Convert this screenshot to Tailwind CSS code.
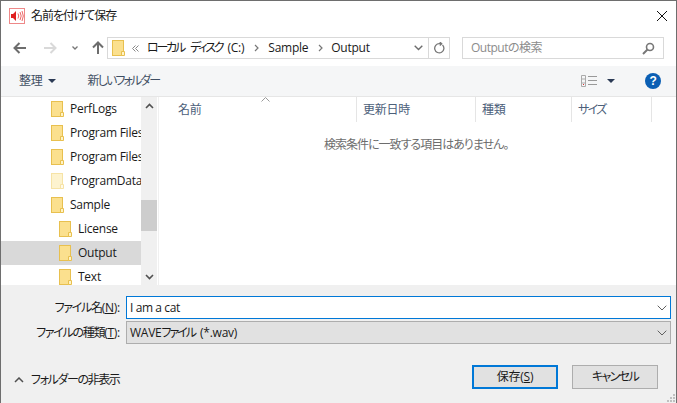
<!DOCTYPE html>
<html lang="ja"><head><meta charset="utf-8">
<script src="https://cdn.jsdelivr.net/npm/@tailwindcss/browser@4"></script>
</head>
<body class="m-0 overflow-hidden bg-white">
<div class="w-[677px] h-[403px] flex flex-col border border-[#6e6e6e] border-b-0 bg-white text-[12px] tracking-[-0.25px] [font-feature-settings:'palt'] text-[#1a1a1a] font-['Open_Sans','Noto_Sans_CJK_JP',sans-serif] overflow-hidden">
  <!-- title -->
  <div class="h-[29px] shrink-0 flex items-center pl-[8px] relative">
    <svg width="16" height="16" viewBox="0 0 16 16" class="shrink-0"><rect x=".5" y=".5" width="15" height="15" fill="#fff" stroke="#e88"/><path d="M2 6h2l3-3v10l-3-3H2z" fill="#e02020"/><path d="M9 5.5q1.5 2.5 0 5M11 4q2.4 4 0 8M13 3q2.6 5 0 10" fill="none" stroke="#e66" stroke-width="1"/></svg>
    <span class="ml-[6px] text-[12px] tracking-[-1.1px]">名前を付けて保存</span>
    <svg width="12" height="12" viewBox="0 0 12 12" class="absolute left-[655px] top-[9px]"><path d="M1 1l10 10M11 1L1 11" stroke="#111" stroke-width="1" fill="none"/></svg>
  </div>
  <!-- nav -->
  <div class="h-[36px] shrink-0 flex items-start pt-[7px]">
    <div class="w-[106px] h-[22px] shrink-0 flex items-center">
      <svg width="14" height="12" viewBox="0 0 14 12" class="ml-[12px]"><path d="M13 6H2M6.5 1L1.5 6l5 5" fill="none" stroke="#6d6d6d" stroke-width="2"/></svg>
      <svg width="14" height="12" viewBox="0 0 14 12" class="ml-[16px]"><path d="M1 6h11M7.5 1l5 5-5 5" fill="none" stroke="#d9d9d9" stroke-width="2"/></svg>
      <svg width="6" height="4" viewBox="0 0 6 4" class="ml-[15px]"><path d="M.5.5L3 3 5.5.5" fill="none" stroke="#777" stroke-width="1.3"/></svg>
      <svg width="12" height="14" viewBox="0 0 12 14" class="ml-[14px]"><path d="M6 13V2M1 6.5l5-5 5 5" fill="none" stroke="#6d6d6d" stroke-width="2"/></svg>
    </div>
    <div class="w-[343px] h-[22px] shrink-0 border border-[#d9d9d9] flex items-center">
      <svg width="13" height="16" viewBox="0 0 13 16" class="ml-[4px] shrink-0"><rect x=".5" y=".5" width="11" height="15" fill="#fbe08e" stroke="#e8c04f"/><path d="M9.5 15.5v-4h3v4z" fill="#fff3c6" stroke="#e8c04f"/></svg>
      <svg width="7" height="7" viewBox="0 0 7 7" class="ml-[7px] shrink-0"><path d="M3.5.5l-3 3 3 3M6.5.5l-3 3 3 3" fill="none" stroke="#888"/></svg>
      <span class="ml-[8px] whitespace-nowrap tracking-[-2.2px]">ローカル</span>
      <span class="ml-[6px] whitespace-nowrap tracking-[-2.2px]">ディスク</span>
      <span class="ml-[5px] whitespace-nowrap">(C:)</span>
      <svg width="5" height="8" viewBox="0 0 5 8" class="ml-[10px]"><path d="M1 1l3 3-3 3" fill="none" stroke="#777" stroke-width="1.2"/></svg>
      <span class="ml-[9px]">Sample</span>
      <svg width="5" height="8" viewBox="0 0 5 8" class="ml-[10px]"><path d="M1 1l3 3-3 3" fill="none" stroke="#777" stroke-width="1.2"/></svg>
      <span class="ml-[8px]">Output</span>
      <svg width="9" height="6" viewBox="0 0 9 6" class="ml-auto mr-[5px]"><path d="M.7.8l3.8 3.8L8.3.8" fill="none" stroke="#6d6d6d" stroke-width="1.4"/></svg>
      <div class="w-[21px] h-full border-l border-[#d9d9d9] flex items-center justify-center">
        <svg width="12" height="12" viewBox="0 0 12 12"><path d="M9.5 3a4.6 4.6 0 1 1-3-1.3H8M6.8 0L8.7 1.7 6.8 3.4" fill="none" stroke="#777" stroke-width="1.3"/></svg>
      </div>
    </div>
    <div class="ml-[12px] w-[202px] h-[22px] shrink-0 border border-[#d9d9d9] flex items-center pl-[8px] text-[#8c8c8c]">
      <span class="tracking-[-0.5px]">Outputの検索</span>
      <svg width="13" height="13" viewBox="0 0 13 13" class="ml-auto mr-[8px]"><circle cx="8" cy="5" r="3.5" fill="none" stroke="#777" stroke-width="1.6"/><path d="M5.5 7.5L1 12" stroke="#777" stroke-width="2"/></svg>
    </div>
  </div>
  <!-- toolbar -->
  <div class="h-[31px] shrink-0 bg-[#f5f6f7] border-b border-[#e6e6e6] flex items-center text-[#3f4f63]">
    <span class="ml-[18px]">整理</span>
    <svg width="8" height="4" viewBox="0 0 8 4" class="ml-[5px]"><path d="M0 0h8L4 4z" fill="#2b3a55"/></svg>
    <span class="ml-[32px] tracking-[-1.9px]">新しいフォルダー</span>
    <svg width="16" height="12" viewBox="0 0 16 12" class="ml-auto"><path d="M.5.5h4v11h-4zM.5 4h4M.5 8h4" fill="none" stroke="#aaa"/><path d="M2 9h1v1H2z" fill="#d33"/><path d="M7 1.5h9M7 5.5h9M7 9.5h9" stroke="#999"/></svg>
    <svg width="8" height="4" viewBox="0 0 8 4" class="ml-[10px]"><path d="M0 0h8L4 4z" fill="#2b3a55"/></svg>
    <div class="ml-[30px] mr-[15px] w-[16px] h-[16px] rounded-full bg-[#0b5fb4] text-white font-bold text-[12px] flex items-center justify-center leading-none font-['Liberation_Sans',sans-serif]">?</div>
  </div>
  <!-- main -->
  <div class="h-[188px] shrink-0 flex overflow-hidden">
    <div class="w-[140px] shrink-0 overflow-hidden text-[#1a1a1a]">
      <div class="h-[24px] flex items-center pl-[50px] gap-[6px] whitespace-nowrap"><svg width="13" height="16" viewBox="0 0 13 16" class="shrink-0"><rect x=".5" y=".5" width="11" height="15" fill="#fbe08e" stroke="#e8c04f"/><path d="M9.5 15.5v-4h3v4z" fill="#fff3c6" stroke="#e8c04f"/></svg>PerfLogs</div>
      <div class="h-[24px] flex items-center pl-[50px] gap-[6px] whitespace-nowrap"><svg width="13" height="16" viewBox="0 0 13 16" class="shrink-0"><rect x=".5" y=".5" width="11" height="15" fill="#fbe08e" stroke="#e8c04f"/><path d="M9.5 15.5v-4h3v4z" fill="#fff3c6" stroke="#e8c04f"/></svg>Program Files</div>
      <div class="h-[24px] flex items-center pl-[50px] gap-[6px] whitespace-nowrap"><svg width="13" height="16" viewBox="0 0 13 16" class="shrink-0"><rect x=".5" y=".5" width="11" height="15" fill="#fbe08e" stroke="#e8c04f"/><path d="M9.5 15.5v-4h3v4z" fill="#fff3c6" stroke="#e8c04f"/></svg>Program Files</div>
      <div class="h-[24px] flex items-center pl-[50px] gap-[6px] whitespace-nowrap"><svg width="13" height="16" viewBox="0 0 13 16" class="shrink-0"><rect x=".5" y=".5" width="11" height="15" fill="#fdf3cf" stroke="#f6e3a6"/><path d="M9.5 15.5v-4h3v4z" fill="#fffaea" stroke="#f6e3a6"/></svg>ProgramData</div>
      <div class="h-[24px] flex items-center pl-[50px] gap-[6px] whitespace-nowrap"><svg width="13" height="16" viewBox="0 0 13 16" class="shrink-0"><rect x=".5" y=".5" width="11" height="15" fill="#fbe08e" stroke="#e8c04f"/><path d="M9.5 15.5v-4h3v4z" fill="#fff3c6" stroke="#e8c04f"/></svg>Sample</div>
      <div class="h-[24px] flex items-center pl-[58px] gap-[6px] whitespace-nowrap"><svg width="13" height="16" viewBox="0 0 13 16" class="shrink-0"><rect x=".5" y=".5" width="11" height="15" fill="#fbe08e" stroke="#e8c04f"/><path d="M9.5 15.5v-4h3v4z" fill="#fff3c6" stroke="#e8c04f"/></svg>License</div>
      <div class="h-[24px] flex items-center pl-[58px] gap-[6px] whitespace-nowrap bg-[#d9d9d9]"><svg width="13" height="16" viewBox="0 0 13 16" class="shrink-0"><rect x=".5" y=".5" width="11" height="15" fill="#fbe08e" stroke="#e8c04f"/><path d="M9.5 15.5v-4h3v4z" fill="#fff3c6" stroke="#e8c04f"/></svg>Output</div>
      <div class="h-[24px] flex items-center pl-[58px] gap-[6px] whitespace-nowrap"><svg width="13" height="16" viewBox="0 0 13 16" class="shrink-0"><rect x=".5" y=".5" width="11" height="15" fill="#fbe08e" stroke="#e8c04f"/><path d="M9.5 15.5v-4h3v4z" fill="#fff3c6" stroke="#e8c04f"/></svg>Text</div>
    </div>
    <div class="w-[16px] shrink-0 bg-[#f0f0f0] flex flex-col">
      <div class="h-[17px] flex items-center justify-center"><svg width="9" height="6" viewBox="0 0 9 6"><path d="M1 5l3.5-3.5L8 5" fill="none" stroke="#505050" stroke-width="1.6"/></svg></div>
      <div class="mt-[86px] h-[31px] bg-[#cdcdcd]"></div>
      <div class="mt-auto h-[17px] flex items-center justify-center"><svg width="9" height="6" viewBox="0 0 9 6"><path d="M1 1l3.5 3.5L8 1" fill="none" stroke="#505050" stroke-width="1.6"/></svg></div>
    </div>
    <div class="flex-1 ml-[1px] border-l border-[#f0f0f0] flex flex-col relative">
      <svg width="9" height="5" viewBox="0 0 9 5" class="absolute left-[102px] top-[0px]"><path d="M.5 4.5l4-4 4 4" fill="none" stroke="#9a9a9a"/></svg>
      <div class="h-[25px] flex text-[#4c607a] shrink-0">
        <div class="w-[198px] h-full border-r border-[#e5e5e5] pl-[19px] pt-[1px] flex items-center">名前</div>
        <div class="w-[119px] h-full border-r border-[#e5e5e5] pl-[6px] pt-[1px] flex items-center">更新日時</div>
        <div class="w-[96px] h-full border-r border-[#e5e5e5] pl-[6px] pt-[1px] flex items-center">種類</div>
        <div class="w-[80px] h-full border-r border-[#e5e5e5] pl-[6px] pt-[1px] flex items-center tracking-[-1.7px]">サイズ</div>
      </div>
      <div class="h-[45px] flex items-center pl-[165px] text-[#6d6d6d] tracking-[-1px]">検索条件に一致する項目はありません。</div>
    </div>
  </div>
  <!-- bottom -->
  <div class="flex-1 bg-[#f0f0f0] relative flex flex-col pt-[11px]">
    <div class="flex h-[23px] items-center">
      <div class="w-[125px] text-right pr-[6px] whitespace-nowrap shrink-0"><span class="tracking-[-1.3px]">ファイル名</span>(<span class="underline">N</span>):</div>
      <div class="w-[545px] h-full bg-white border border-[#0078d7] flex items-center pl-[3px] tracking-[-0.4px]">I am a cat
        <svg width="10" height="6" viewBox="0 0 10 6" class="ml-auto mr-[3px]"><path d="M.7.7L5 5 9.3.7" fill="none" stroke="#606060"/></svg>
      </div>
    </div>
    <div class="flex h-[23px] items-center mt-[2px]">
      <div class="w-[125px] text-right pr-[6px] whitespace-nowrap shrink-0"><span class="tracking-[-1.3px]">ファイルの種類</span>(<span class="underline">T</span>):</div>
      <div class="w-[545px] h-full bg-[#e1e1e1] border border-[#adadad] flex items-center pl-[3px]"><span>WAVE</span><span class="tracking-[-2px]">ファイル</span><span class="ml-[5px]">(*.wav)</span>
        <svg width="10" height="6" viewBox="0 0 10 6" class="ml-auto mr-[3px]"><path d="M.7.7L5 5 9.3.7" fill="none" stroke="#606060"/></svg>
      </div>
    </div>
    <div class="flex mt-[21px] items-start">
      <div class="flex items-center h-[24px] pl-[13px] mt-[3px]">
        <svg width="10" height="6" viewBox="0 0 10 6"><path d="M1 5l4-4 4 4" fill="none" stroke="#505050" stroke-width="1.5"/></svg>
        <span class="ml-[7px] tracking-[-1.4px]">フォルダーの非表示</span>
      </div>
      <div class="ml-auto mr-[18px] flex gap-[14px]">
        <div class="w-[86px] h-[24px] bg-[#e1e1e1] border-2 border-[#0078d7] flex items-center justify-center"><span>保存(<span class="underline">S</span>)</span></div>
        <div class="w-[86px] h-[24px] bg-[#e1e1e1] border border-[#adadad] flex items-center justify-center tracking-[-1.6px]">キャンセル</div>
      </div>
    </div>
    <svg width="9" height="9" viewBox="0 0 9 9" class="absolute right-[1px] bottom-[1px]"><path d="M7 1h2v2H7zM4 4h2v2H4zM7 4h2v2H7zM1 7h2v2H1zM4 7h2v2H4zM7 7h2v2H7z" fill="#c0c0c0"/></svg>
  </div>
</div>
</body></html>
